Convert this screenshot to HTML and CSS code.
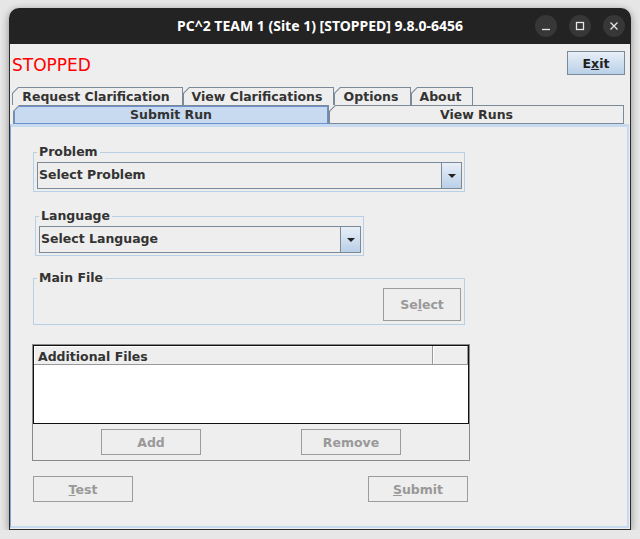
FILE: index.html
```html
<!DOCTYPE html>
<html>
<head>
<meta charset="utf-8">
<title>PC^2 TEAM 1</title>
<link rel="stylesheet" href="styles.css">
</head>
<body>
<div class="window">
  <header class="titlebar">
    <div class="title">PC^2 TEAM 1 (Site 1) [STOPPED] 9.8.0-6456</div>
    <div class="wm">
      <span class="wm-btn"><svg width="10" height="10" viewBox="0 0 10 10"><path d="M1 8.5H9" stroke="#e6e6e6" stroke-width="1.3"/></svg></span>
      <span class="wm-btn"><svg width="10" height="10" viewBox="0 0 10 10"><rect x="1.5" y="1.5" width="7" height="7" fill="none" stroke="#e6e6e6" stroke-width="1.3"/></svg></span>
      <span class="wm-btn"><svg width="10" height="10" viewBox="0 0 10 10"><path d="M1.5 1.5L8.5 8.5M8.5 1.5L1.5 8.5" stroke="#e6e6e6" stroke-width="1.3"/></svg></span>
    </div>
  </header>
  <main class="client">
    <div class="toprow">
      <span class="status">STOPPED</span>
      <button class="btn btn-exit">E<u>x</u>it</button>
    </div>
    <div class="tabs">
      <div class="tabrow row1">
        <div class="tab t-req"><span class="tab-in">Request Clarification</span></div>
        <div class="tab t-vclar"><span class="tab-in">View Clarifications</span></div>
        <div class="tab t-opt"><span class="tab-in">Options</span></div>
        <div class="tab t-about"><span class="tab-in">About</span></div>
      </div>
      <div class="tabrow row2">
        <div class="tab t-submit selected"><span class="tab-in">Submit Run</span></div>
        <div class="tab t-runs"><span class="tab-in">View Runs</span></div>
      </div>
    </div>
    <section class="panel">
      <div class="form">
        <fieldset class="group g-problem">
          <legend>Problem</legend>
          <div class="combo"><span class="combo-text">Select Problem</span><span class="combo-arrow"><span class="tri"></span></span></div>
        </fieldset>
        <fieldset class="group g-lang">
          <legend>Language</legend>
          <div class="combo"><span class="combo-text">Select Language</span><span class="combo-arrow"><span class="tri"></span></span></div>
        </fieldset>
        <fieldset class="group g-main">
          <legend>Main File</legend>
          <div class="main-row"><button class="btn btn-select" disabled>Se<u>l</u>ect</button></div>
        </fieldset>
        <div class="files">
          <div class="table">
            <div class="thead">
              <div class="th th1">Additional Files</div>
              <div class="th th2"></div>
            </div>
            <div class="tbody"></div>
          </div>
          <div class="filebtns">
            <button class="btn btn-wide" disabled>Add</button>
            <button class="btn btn-wide" disabled>Remove</button>
          </div>
        </div>
        <div class="actions">
          <button class="btn btn-wide" disabled><u>T</u>est</button>
          <button class="btn btn-wide" disabled><u>S</u>ubmit</button>
        </div>
      </div>
    </section>
  </main>
</div>
</body>
</html>
```
FILE: styles.css
```css
* { box-sizing: border-box; }

body {
  margin: 0;
  background: #e7e7e7;
  font-family: "DejaVu Sans", sans-serif;
}

.window {
  width: 622px;
  margin: 8px 0 0 9px;
  border-radius: 10px 10px 0 0;
  box-shadow: 0 2px 9px rgba(0, 0, 0, 0.4);
}

.titlebar {
  height: 36px;
  background: #232323;
  border-radius: 10px 10px 0 0;
  display: grid;
  grid-template-columns: 1fr auto 1fr;
  align-items: center;
}

.title {
  grid-column: 2;
  color: #ffffff;
  font: 700 14px/1 "Noto Sans", sans-serif;
}

.wm {
  grid-column: 3;
  justify-self: end;
  display: flex;
  gap: 12px;
  padding-right: 6px;
}

.wm-btn {
  width: 22px;
  height: 22px;
  border-radius: 50%;
  background: #373737;
  display: flex;
  align-items: center;
  justify-content: center;
}

.client {
  height: 486px;
  background: #eeeeee;
  border: 1px solid #2c2c2c;
  border-top: 0;
  display: flex;
  flex-direction: column;
}

.toprow {
  height: 43px;
  flex: none;
  display: flex;
  justify-content: space-between;
  align-items: flex-start;
  padding: 0 5px 0 2px;
}

.status {
  color: #ff0000;
  font-size: 17px;
  line-height: 20px;
  margin-top: 11px;
}

.btn {
  font: 700 12.5px "DejaVu Sans", sans-serif;
  color: #333333;
  background: #eeeeee;
  border: 1px solid #9c9c9c;
  padding: 0;
}

.btn u {
  text-decoration: underline;
  text-underline-offset: 1px;
}

.btn:disabled {
  color: #999999;
}

.btn-exit {
  width: 58px;
  height: 24px;
  margin-top: 7px;
  border-color: #7a8a99;
  background: linear-gradient(#e8eff7, #b9d0e7);
  color: #222222;
}

.tabs { flex: none; }

.tabrow {
  display: flex;
  height: 18px;
  padding-left: 2px;
}

.row2 {
  height: 19px;
  padding-left: 3px;
}

.tab {
  height: 100%;
  background: #7a8a99;
  padding: 1px 1px 0 1px;
  clip-path: polygon(6px 0, 100% 0, 100% 100%, 0 100%, 0 6px);
}

.tab-in {
  display: block;
  height: 100%;
  background: #eeeeee;
  clip-path: polygon(5.5px 0, 100% 0, 100% 100%, 0 100%, 0 5.5px);
  font: 700 12.5px/17px "DejaVu Sans", sans-serif;
  color: #333333;
  text-align: center;
}

.row1 .tab-in { padding-right: 3px; }

.t-req { width: 171px; }
.t-vclar { width: 151px; }
.t-opt { width: 77px; }
.t-about { width: 62px; }
.t-submit { width: 316px; }
.t-runs { width: 295px; padding-bottom: 1px; }

.selected .tab-in {
  background: #c8daf0;
  box-shadow: inset 0 0 0 1px #6e8fcd;
}

.panel {
  flex: none;
  height: 404px;
  margin-right: 1px;
  border-top: 3px solid #c8daf0;
  border-left: 1px solid #84a4d8;
  border-right: 2px solid #c8daf0;
  border-bottom: 2px solid #c8daf0;
  padding: 17px 0 0 21px;
}

.form {
  width: 438px;
  display: flex;
  flex-direction: column;
  align-items: flex-start;
}

.group {
  margin: 0;
  padding: 2px 2px 2px 3px;
  border: 1px solid #b8cfe5;
  min-width: 0;
}

.group legend {
  padding: 0 2px;
  font: 700 12.5px/16px "DejaVu Sans", sans-serif;
  color: #333333;
}

.g-problem { margin-left: 1px; width: 432px; }
.g-lang { margin: 16px 0 0 3px; width: 329px; }
.g-main { margin: 14px 0 0 1px; width: 432px; padding-bottom: 3px; }

.combo {
  height: 27px;
  border: 1px solid #7a8a99;
  background: #eeeeee;
  display: flex;
}

.combo-text {
  flex: 1;
  padding: 1px 0 2px 1px;
  font: 700 12.5px/22px "DejaVu Sans", sans-serif;
  color: #333333;
}

.combo-arrow {
  width: 20px;
  border-left: 1px solid #7a8a99;
  background: linear-gradient(#e8eff7, #b9d0e7);
  display: flex;
  align-items: center;
  justify-content: center;
}

.tri {
  width: 0;
  height: 0;
  border-left: 4px solid transparent;
  border-right: 4px solid transparent;
  border-top: 4px solid #222222;
}

.main-row {
  display: flex;
  justify-content: flex-end;
}

.btn-select {
  width: 78px;
  height: 33px;
  margin-right: 1px;
}

.files {
  width: 438px;
  margin-top: 19px;
  border: 1px solid #8a8a8a;
}

.table {
  height: 79px;
  border: 1px solid #111111;
  background: #ffffff;
  display: flex;
  flex-direction: column;
}

.thead {
  display: flex;
  height: 19px;
  flex: none;
}

.th {
  background: #eeeeee;
  border-right: 1px solid #999999;
  border-bottom: 1px solid #999999;
  box-shadow: inset 1px 1px 0 #ffffff;
  font: 700 12.5px/17px "DejaVu Sans", sans-serif;
  color: #333333;
  padding: 2px 0 0 4px;
}

.th1 { width: 399px; }
.th2 { flex: 1; }

.tbody {
  flex: 1;
  background: #ffffff;
}

.filebtns {
  display: flex;
  justify-content: center;
  gap: 100px;
  padding: 5px 0;
}

.btn-wide {
  width: 100px;
  height: 26px;
}

.actions {
  width: 100%;
  display: flex;
  justify-content: space-between;
  margin-top: 15px;
  padding: 0 2px 0 1px;
}
```
